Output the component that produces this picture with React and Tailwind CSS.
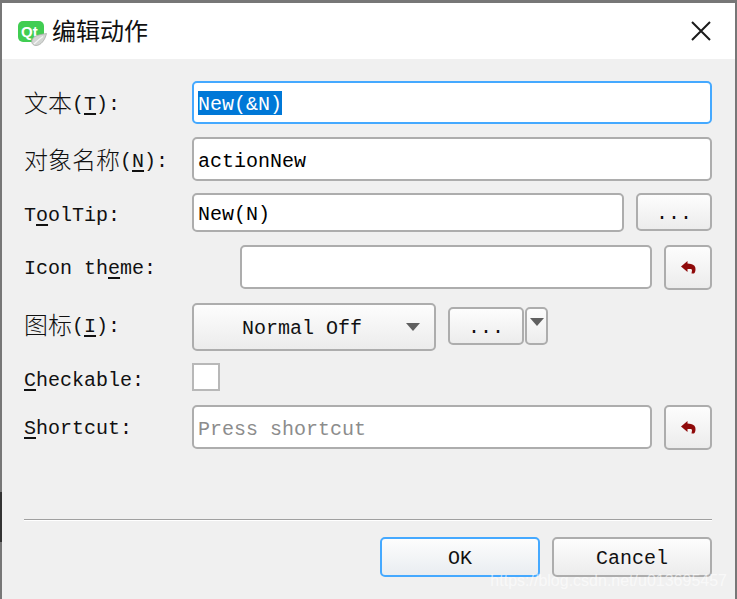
const mono = "font-['Liberation_Mono','Noto_Sans_CJK_SC',monospace]"

function Cjk({ children }) {
  return <span className="align-[-2px] text-[24px] font-['Noto_Sans_CJK_SC','Liberation_Mono',sans-serif] font-light">{children}</span>
}

function Key({ children }) {
  return <u className="underline decoration-2 underline-offset-[3px]">{children}</u>
}

function QtLogo() {
  return (
    <div className="relative mt-[18px] h-[25px] w-[29px] shrink-0 self-start">
      <div className="h-[21px] w-[26px] rounded-[5px] bg-[#41cd52] pl-[3px] pt-[3px] text-[15px] font-bold leading-none text-white font-['Liberation_Sans',sans-serif]">
        Qt
      </div>
      <svg className="absolute bottom-0 right-0" width="16" height="13" viewBox="0 0 16 13">
        <path d="M15.500 0.500 C10 1.500 3 2 1 7 C0 10 2 12.500 5 12.500 C10 12.500 14 7 15.500 0.500Z" fill="#d3d6d3" stroke="#a9aca9" strokeWidth="0.8" />
        <path d="M3 11 C6 8 9 5.500 12 3.500" fill="none" stroke="#f5f5f5" strokeWidth="1.200" />
      </svg>
    </div>
  )
}

function UndoIcon() {
  return (
    <svg width="15" height="13" viewBox="0 0 15 13">
      <path d="M0 5.500 L6.500 0 L6.500 2.500 L10 3 C13 3.500 14.500 5.500 14.500 8 C14.500 10 14 11.500 13 12.500 L10.500 12.500 L11 9.500 C11 8.500 10.500 8 9.500 8 L6.500 8 L6.500 11Z" fill="#8f0a0a" />
    </svg>
  )
}

function ToolButton({ className, children }) {
  return (
    <button
      type="button"
      className={`flex items-center justify-center rounded-[5px] border-2 border-[#adadad] bg-gradient-to-b from-[#fdfdfd] to-[#ececec] ${className}`}
    >
      {children}
    </button>
  )
}

function Dots() {
  return <span className="pt-[4px] leading-none">...</span>
}

function Arrow({ className }) {
  return <span className={`h-0 w-0 border-x-[7px] border-t-[8px] border-x-transparent border-t-[#606060] ${className}`} />
}

function Field({ className, value, placeholder }) {
  return (
    <input
      readOnly
      defaultValue={value}
      placeholder={placeholder}
      className={`h-full min-w-0 rounded-[5px] border-2 border-[#adadad] bg-white px-[4px] pt-[4px] text-black outline-none placeholder:text-[#8c8c8c] ${className}`}
    />
  )
}

export default function App() {
  return (
    <div className={`relative flex h-[599px] w-[737px] flex-col border-x-2 border-t-[3px] border-[#777777] bg-[#f0f0f0] text-[20px] leading-none text-[#111111] ${mono}`}>
      <header className="flex h-[56px] shrink-0 items-center bg-white pl-[16px] pr-[24px]">
        <QtLogo />
        <h1 className="ml-[5px] pb-[2px] text-[24px] font-normal font-['Noto_Sans_CJK_SC',sans-serif]">编辑动作</h1>
        <svg className="ml-auto" width="20" height="20" viewBox="0 0 20 20">
          <path d="M1 1 L19 19 M19 1 L1 19" stroke="#1a1a1a" strokeWidth="2" />
        </svg>
      </header>

      <main className="flex flex-1 flex-col pb-[22px] pl-[22px] pr-[23px] pt-[22px]">
        <div className="flex h-[43px] items-center">
          <label className="w-[168px] shrink-0"><Cjk>文本</Cjk>(<Key>T</Key>):</label>
          <div className="flex h-full flex-1 items-center rounded-[5px] border-2 border-[#45a9ff] bg-white px-[4px]">
            <span className="bg-[#0078d7] pt-[4px] text-white">New(&amp;N)</span>
          </div>
        </div>

        <div className="mt-[13px] flex h-[44px] items-center">
          <label className="w-[168px] shrink-0"><Cjk>对象名称</Cjk>(<Key>N</Key>):</label>
          <Field className="flex-1" value="actionNew" />
        </div>

        <div className="mt-[12px] flex h-[39px] items-center">
          <label className="w-[168px] shrink-0 pt-[6px]">T<Key>o</Key>olTip:</label>
          <Field className="flex-1" value="New(N)" />
          <ToolButton className="ml-[12px] h-[38px] w-[76px] shrink-0 self-start"><Dots /></ToolButton>
        </div>

        <div className="mt-[13px] flex h-[44px] items-center">
          <label className="w-[216px] shrink-0 pt-[4px]">Icon th<Key>e</Key>me:</label>
          <Field className="flex-1" />
          <ToolButton className="ml-[12px] h-[45px] w-[48px] shrink-0"><UndoIcon /></ToolButton>
        </div>

        <div className="mt-[14px] flex h-[48px] items-center">
          <label className="w-[168px] shrink-0 pb-[5px]"><Cjk>图标</Cjk>(<Key>I</Key>):</label>
          <ToolButton className="h-[48px] w-[244px] shrink-0 pl-[2px]">
            <span className="ml-[46px] pt-[4px]">Normal Off</span>
            <Arrow className="ml-auto mr-[14px]" />
          </ToolButton>
          <ToolButton className="ml-[12px] mt-[4px] h-[38px] w-[76px] shrink-0 self-start"><Dots /></ToolButton>
          <ToolButton className="ml-[1px] mt-[4px] h-[38px] w-[23px] shrink-0 self-start items-start pt-[9px]"><Arrow /></ToolButton>
        </div>

        <div className="mt-[12px] flex h-[28px] items-center">
          <label className="w-[168px] shrink-0 pt-[8px]"><Key>C</Key>heckable:</label>
          <span className="h-[28px] w-[28px] border-2 border-[#b8b8b8] bg-white" />
        </div>

        <div className="mt-[14px] flex h-[44px] items-center">
          <label className="w-[168px] shrink-0 pt-[4px]"><Key>S</Key>hortcut:</label>
          <Field className="flex-1" placeholder="Press shortcut" />
          <ToolButton className="ml-[12px] h-[45px] w-[48px] shrink-0"><UndoIcon /></ToolButton>
        </div>

        <div className="mt-auto border-t border-b border-t-[#a0a0a0] border-b-white" />

        <div className="mt-[16px] flex justify-end gap-[12px]">
          <button type="button" className="h-[40px] w-[160px] rounded-[5px] border-2 border-[#45a9ff] bg-gradient-to-b from-[#fdfdfd] to-[#e9edf1] pt-[4px]">OK</button>
          <button type="button" className="h-[40px] w-[160px] rounded-[5px] border-2 border-[#adadad] bg-gradient-to-b from-[#fdfdfd] to-[#ececec] pt-[4px]">Cancel</button>
        </div>
      </main>

      <span className="absolute -left-[2px] top-[489px] h-[50px] w-[2px] bg-[#333333]" />

      <span className="absolute bottom-[10px] right-[8px] text-[16px] leading-none text-white/60 font-['Liberation_Sans',sans-serif]">
        https://blog.csdn.net/u013695457
      </span>
    </div>
  )
}
